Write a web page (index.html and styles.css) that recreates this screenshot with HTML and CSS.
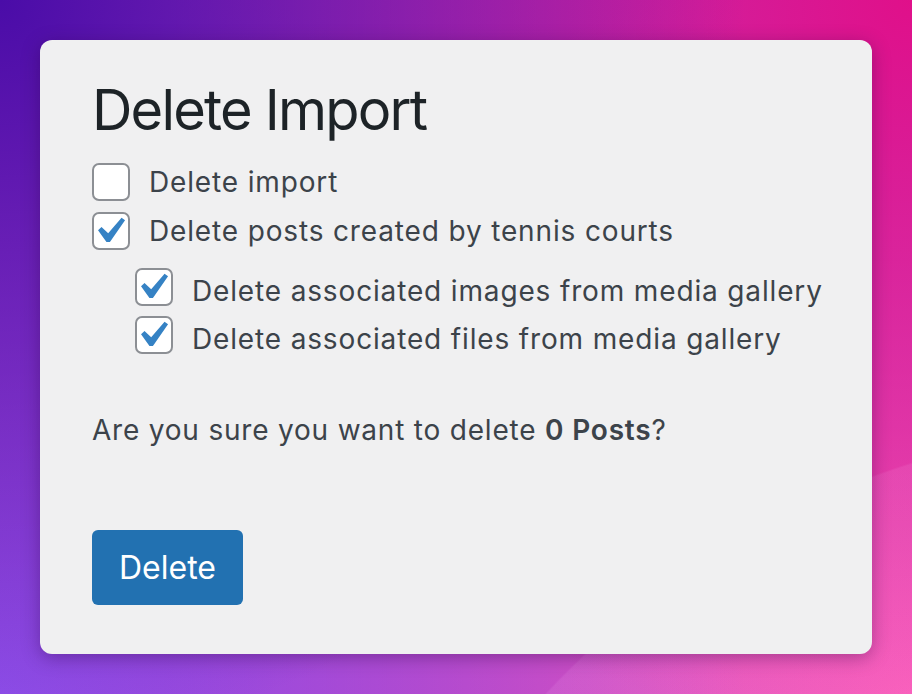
FILE: index.html
```html
<!DOCTYPE html>
<html>
<head>
    <title>Delete Import</title>
    <link rel="stylesheet" href="styles.css">
</head>
<body>
    <div class="card">
        <h1>Delete Import</h1>

        <div class="options">
            <label class="option">
                <span class="box"></span>
                <span class="text">Delete import</span>
            </label>
            <label class="option">
                <span class="box checked">
                    <svg viewBox="0 0 20 20"><path d="M14.83 4.89l1.34.94-5.81 8.38H9.02L5.78 9.67l1.34-1.25 2.57 2.4z"/></svg>
                </span>
                <span class="text">Delete posts created by tennis courts</span>
            </label>

            <div class="sub-options">
                <label class="option">
                    <span class="box checked">
                        <svg viewBox="0 0 20 20"><path d="M14.83 4.89l1.34.94-5.81 8.38H9.02L5.78 9.67l1.34-1.25 2.57 2.4z"/></svg>
                    </span>
                    <span class="text">Delete associated images from media gallery</span>
                </label>
                <label class="option">
                    <span class="box checked">
                        <svg viewBox="0 0 20 20"><path d="M14.83 4.89l1.34.94-5.81 8.38H9.02L5.78 9.67l1.34-1.25 2.57 2.4z"/></svg>
                    </span>
                    <span class="text">Delete associated files from media gallery</span>
                </label>
            </div>
        </div>

        <p class="confirm">Are you sure you want to delete <strong>0 Posts</strong>?</p>

        <div class="actions">
            <button type="button">Delete</button>
        </div>
    </div>
</body>
</html>
```

FILE: styles.css
```css
html { height: 100%; }
body {
    margin: 0;
    min-height: 100%;
    padding: 40px;
    box-sizing: border-box;
    font-family: Inter, "Noto Sans", sans-serif;
    background:
        radial-gradient(circle at 1167px 1274px, rgba(255, 200, 255, 0.1) 849px, rgba(255, 200, 255, 0) 851px),
        radial-gradient(circle at 0 0, #4a0ca8, rgba(74, 12, 168, 0) 65%),
        radial-gradient(circle at 100% 0, #e0108a, rgba(224, 16, 138, 0) 65%),
        radial-gradient(circle at 0 100%, #9050ea, rgba(144, 80, 234, 0) 65%),
        radial-gradient(circle at 100% 100%, #fa5ab8, rgba(250, 90, 184, 0) 65%),
        #b03cc0;
}

.card {
    background: #f0f0f1;
    border-radius: 12px;
    padding: 37px 40px 49px 52px;
    box-shadow: 0 4px 18px rgba(40, 0, 60, 0.35);
    color: #3c434a;
}

h1 {
    margin: 0;
    font-size: 56px;
    line-height: 67px;
    font-weight: 400;
    letter-spacing: -1.8px;
    color: #1d2327;
}

.options { margin-top: 19px; display: flex; flex-direction: column; gap: 11px; }
.sub-options { margin: 7px 0 0 43px; display: flex; flex-direction: column; gap: 10px; }

.option { display: flex; align-items: center; gap: 19px; font-size: 28px; line-height: 38px; letter-spacing: 0.85px; white-space: nowrap; }
.sub-options .text { transform: translateY(4px); }

.box {
    width: 38px;
    height: 38px;
    box-sizing: border-box;
    border: 2px solid #8c8f94;
    border-radius: 7px;
    background: #fff;
    flex: none;
    display: flex;
    align-items: center;
    justify-content: center;
}
.box svg { flex: none; width: 52px; height: 52px; fill: #3582c4; transform: translate(-2px, 0); }

.confirm { margin: 56px 0 0; font-size: 28px; line-height: 40px; letter-spacing: 0.8px; }
.confirm strong { font-weight: 600; }

.actions { margin-top: 80px; }
button {
    background: #2271b1;
    color: #fff;
    border: none;
    border-radius: 6px;
    height: 75px;
    padding: 0 27px;
    font-family: inherit;
    font-size: 32px;
    cursor: pointer;
}
```
